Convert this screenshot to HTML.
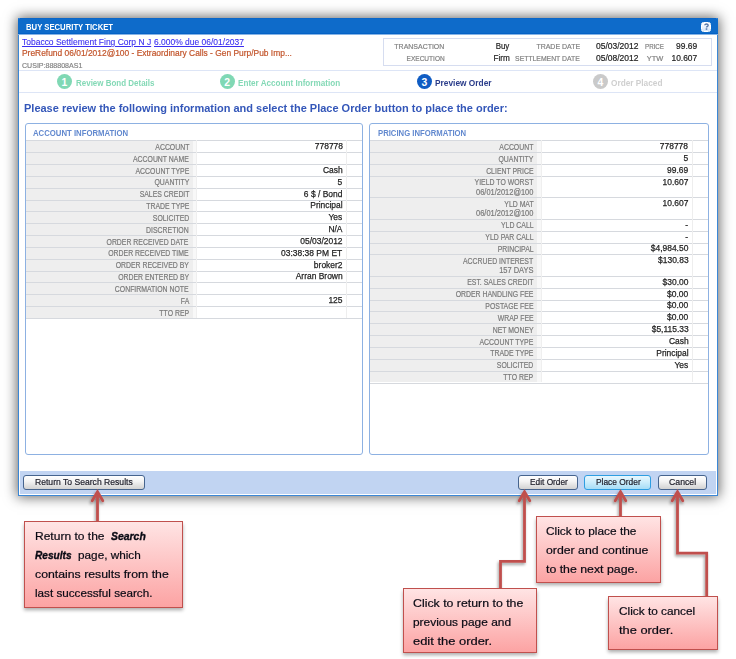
<!DOCTYPE html>
<html><head><meta charset="utf-8">
<style>
*{margin:0;padding:0;box-sizing:border-box}
html,body{width:736px;height:659px;background:#fff;overflow:hidden;position:relative;font-family:"Liberation Sans",sans-serif}
.abs,.bg,.t{position:absolute}
.t{white-space:nowrap;-webkit-text-stroke:0.2px currentColor}
.t.b{-webkit-text-stroke:0}
#win{position:absolute;left:18px;top:18px;width:700px;height:478px;background:#fff;border:1px solid #3b87d6;border-top:none;
  box-shadow:0 0 12px 1px rgba(0,0,0,0.62)}
#title{position:absolute;left:18px;top:18px;width:700px;height:17px;border-radius:2px 2px 0 0;background:linear-gradient(#0862c6 0,#0e6bca 1px,#0e6bca 15px,#0462c6 15px,#0462c6 16px,#86b4e6 16px,#86b4e6 17px)}
#help{position:absolute;left:701.2px;top:21.7px;width:10.3px;height:10px;background:linear-gradient(#ffffff,#d4e6fa);border:1px solid #fff;border-radius:2.5px;}
.panel{position:absolute;top:123px;height:332px;border:1px solid #8db1e2;border-radius:3px;background:#fff}
.btn{position:absolute;top:475px;height:15px;border:1px solid #46648e;border-radius:3px;background:linear-gradient(#ffffff 0%,#f4f4f4 40%,#d2d2d2 100%)}
.call{position:absolute;border:1.5px solid #c0504d;background:linear-gradient(#ffe4e4,#fca3a3);box-shadow:0 2.5px 3.5px rgba(0,0,0,0.32)}
</style></head><body>
<div id="win"></div>
<div id="title"></div>
<div id="help"><svg width="9" height="9" viewBox="0 0 9 9" style="position:absolute;left:-0.5px;top:-0.5px"><path d="M2.8 3.2 C2.8 1.6 6.2 1.6 6.2 3.2 C6.2 4.4 4.5 4.3 4.5 5.6" fill="none" stroke="#5577a8" stroke-width="1.3"/><rect x="3.7" y="6.3" width="1.6" height="1.5" fill="#5577a8"/></svg></div>

<!-- transaction box -->
<div class="bg" style="left:382.5px;top:38px;width:329.5px;height:28px;border:1px solid #d6ddf0"></div>
<!-- divider lines -->
<div class="bg" style="left:19px;top:70px;width:698px;height:1px;background:#dde5f6"></div>
<div class="bg" style="left:19px;top:92px;width:698px;height:1px;background:#dde5f6"></div>
<!-- panels -->
<div class="panel" style="left:25px;width:338px"></div>
<div class="panel" style="left:369px;width:340px"></div>
<div class="bg" style="left:26px;top:140.40px;width:166.60px;height:11.84px;background:#eeeeee"></div>
<div class="bg" style="left:192.60px;top:140.40px;width:3.90px;height:11.84px;background:#f8f8f8"></div>
<div class="bg" style="left:26px;top:140.40px;width:336.00px;height:1px;background:#d6d9de"></div>
<div class="t" style="top:142.89px;font-size:8.4px;line-height:8.4px;color:#7a7a7a;left:147.67px;transform-origin:100% 0;transform:scaleX(0.8238);">ACCOUNT</div>
<div class="t" style="top:142.23px;font-size:9.3px;line-height:9.3px;color:#1e1e1e;left:311.57px;transform-origin:100% 0;transform:scaleX(0.9091);-webkit-text-stroke:0.25px currentColor;">778778</div>
<div class="bg" style="left:26px;top:152.24px;width:166.60px;height:11.84px;background:#eeeeee"></div>
<div class="bg" style="left:192.60px;top:152.24px;width:3.90px;height:11.84px;background:#f8f8f8"></div>
<div class="bg" style="left:26px;top:152.24px;width:336.00px;height:1px;background:#d6d9de"></div>
<div class="t" style="top:154.73px;font-size:8.4px;line-height:8.4px;color:#7a7a7a;left:121.22px;transform-origin:100% 0;transform:scaleX(0.8238);">ACCOUNT NAME</div>
<div class="bg" style="left:26px;top:164.08px;width:166.60px;height:11.84px;background:#eeeeee"></div>
<div class="bg" style="left:192.60px;top:164.08px;width:3.90px;height:11.84px;background:#f8f8f8"></div>
<div class="bg" style="left:26px;top:164.08px;width:336.00px;height:1px;background:#d6d9de"></div>
<div class="t" style="top:166.57px;font-size:8.4px;line-height:8.4px;color:#7a7a7a;left:123.70px;transform-origin:100% 0;transform:scaleX(0.8238);">ACCOUNT TYPE</div>
<div class="t" style="top:165.91px;font-size:9.3px;line-height:9.3px;color:#1e1e1e;left:320.89px;transform-origin:100% 0;transform:scaleX(0.9091);-webkit-text-stroke:0.25px currentColor;">Cash</div>
<div class="bg" style="left:26px;top:175.92px;width:166.60px;height:11.84px;background:#eeeeee"></div>
<div class="bg" style="left:192.60px;top:175.92px;width:3.90px;height:11.84px;background:#f8f8f8"></div>
<div class="bg" style="left:26px;top:175.92px;width:336.00px;height:1px;background:#d6d9de"></div>
<div class="t" style="top:178.41px;font-size:8.4px;line-height:8.4px;color:#7a7a7a;left:146.73px;transform-origin:100% 0;transform:scaleX(0.8238);">QUANTITY</div>
<div class="t" style="top:177.75px;font-size:9.3px;line-height:9.3px;color:#1e1e1e;left:337.43px;transform-origin:100% 0;transform:scaleX(0.9091);-webkit-text-stroke:0.25px currentColor;">5</div>
<div class="bg" style="left:26px;top:187.76px;width:166.60px;height:11.84px;background:#eeeeee"></div>
<div class="bg" style="left:192.60px;top:187.76px;width:3.90px;height:11.84px;background:#f8f8f8"></div>
<div class="bg" style="left:26px;top:187.76px;width:336.00px;height:1px;background:#d6d9de"></div>
<div class="t" style="top:190.25px;font-size:8.4px;line-height:8.4px;color:#7a7a7a;left:128.52px;transform-origin:100% 0;transform:scaleX(0.8238);">SALES CREDIT</div>
<div class="t" style="top:189.59px;font-size:9.3px;line-height:9.3px;color:#1e1e1e;left:300.20px;transform-origin:100% 0;transform:scaleX(0.9091);-webkit-text-stroke:0.25px currentColor;">6 $ / Bond</div>
<div class="bg" style="left:26px;top:199.60px;width:166.60px;height:11.84px;background:#eeeeee"></div>
<div class="bg" style="left:192.60px;top:199.60px;width:3.90px;height:11.84px;background:#f8f8f8"></div>
<div class="bg" style="left:26px;top:199.60px;width:336.00px;height:1px;background:#d6d9de"></div>
<div class="t" style="top:202.09px;font-size:8.4px;line-height:8.4px;color:#7a7a7a;left:136.61px;transform-origin:100% 0;transform:scaleX(0.8238);">TRADE TYPE</div>
<div class="t" style="top:201.43px;font-size:9.3px;line-height:9.3px;color:#1e1e1e;left:306.93px;transform-origin:100% 0;transform:scaleX(0.9091);-webkit-text-stroke:0.25px currentColor;">Principal</div>
<div class="bg" style="left:26px;top:211.44px;width:166.60px;height:11.84px;background:#eeeeee"></div>
<div class="bg" style="left:192.60px;top:211.44px;width:3.90px;height:11.84px;background:#f8f8f8"></div>
<div class="bg" style="left:26px;top:211.44px;width:336.00px;height:1px;background:#d6d9de"></div>
<div class="t" style="top:213.93px;font-size:8.4px;line-height:8.4px;color:#7a7a7a;left:144.86px;transform-origin:100% 0;transform:scaleX(0.8238);">SOLICITED</div>
<div class="t" style="top:213.27px;font-size:9.3px;line-height:9.3px;color:#1e1e1e;left:327.43px;transform-origin:100% 0;transform:scaleX(0.9091);-webkit-text-stroke:0.25px currentColor;">Yes</div>
<div class="bg" style="left:26px;top:223.28px;width:166.60px;height:11.84px;background:#eeeeee"></div>
<div class="bg" style="left:192.60px;top:223.28px;width:3.90px;height:11.84px;background:#f8f8f8"></div>
<div class="bg" style="left:26px;top:223.28px;width:336.00px;height:1px;background:#d6d9de"></div>
<div class="t" style="top:225.77px;font-size:8.4px;line-height:8.4px;color:#7a7a7a;left:137.40px;transform-origin:100% 0;transform:scaleX(0.8238);">DISCRETION</div>
<div class="t" style="top:225.11px;font-size:9.3px;line-height:9.3px;color:#1e1e1e;left:327.10px;transform-origin:100% 0;transform:scaleX(0.9091);-webkit-text-stroke:0.25px currentColor;">N/A</div>
<div class="bg" style="left:26px;top:235.12px;width:166.60px;height:11.84px;background:#eeeeee"></div>
<div class="bg" style="left:192.60px;top:235.12px;width:3.90px;height:11.84px;background:#f8f8f8"></div>
<div class="bg" style="left:26px;top:235.12px;width:336.00px;height:1px;background:#d6d9de"></div>
<div class="t" style="top:237.61px;font-size:8.4px;line-height:8.4px;color:#7a7a7a;left:89.47px;transform-origin:100% 0;transform:scaleX(0.8238);">ORDER RECEIVED DATE</div>
<div class="t" style="top:236.95px;font-size:9.3px;line-height:9.3px;color:#1e1e1e;left:296.05px;transform-origin:100% 0;transform:scaleX(0.9091);-webkit-text-stroke:0.25px currentColor;">05/03/2012</div>
<div class="bg" style="left:26px;top:246.96px;width:166.60px;height:11.84px;background:#eeeeee"></div>
<div class="bg" style="left:192.60px;top:246.96px;width:3.90px;height:11.84px;background:#f8f8f8"></div>
<div class="bg" style="left:26px;top:246.96px;width:336.00px;height:1px;background:#d6d9de"></div>
<div class="t" style="top:249.45px;font-size:8.4px;line-height:8.4px;color:#7a7a7a;left:91.34px;transform-origin:100% 0;transform:scaleX(0.8238);">ORDER RECEIVED TIME</div>
<div class="t" style="top:248.79px;font-size:9.3px;line-height:9.3px;color:#1e1e1e;left:275.40px;transform-origin:100% 0;transform:scaleX(0.9091);-webkit-text-stroke:0.25px currentColor;">03:38:38 PM ET</div>
<div class="bg" style="left:26px;top:258.80px;width:166.60px;height:11.84px;background:#eeeeee"></div>
<div class="bg" style="left:192.60px;top:258.80px;width:3.90px;height:11.84px;background:#f8f8f8"></div>
<div class="bg" style="left:26px;top:258.80px;width:336.00px;height:1px;background:#d6d9de"></div>
<div class="t" style="top:261.29px;font-size:8.4px;line-height:8.4px;color:#7a7a7a;left:100.05px;transform-origin:100% 0;transform:scaleX(0.8238);">ORDER RECEIVED BY</div>
<div class="t" style="top:260.63px;font-size:9.3px;line-height:9.3px;color:#1e1e1e;left:311.07px;transform-origin:100% 0;transform:scaleX(0.9091);-webkit-text-stroke:0.25px currentColor;">broker2</div>
<div class="bg" style="left:26px;top:270.64px;width:166.60px;height:11.84px;background:#eeeeee"></div>
<div class="bg" style="left:192.60px;top:270.64px;width:3.90px;height:11.84px;background:#f8f8f8"></div>
<div class="bg" style="left:26px;top:270.64px;width:336.00px;height:1px;background:#d6d9de"></div>
<div class="t" style="top:273.13px;font-size:8.4px;line-height:8.4px;color:#7a7a7a;left:102.85px;transform-origin:100% 0;transform:scaleX(0.8238);">ORDER ENTERED BY</div>
<div class="t" style="top:272.47px;font-size:9.3px;line-height:9.3px;color:#1e1e1e;left:290.91px;transform-origin:100% 0;transform:scaleX(0.9091);-webkit-text-stroke:0.25px currentColor;">Arran Brown</div>
<div class="bg" style="left:26px;top:282.48px;width:166.60px;height:11.84px;background:#eeeeee"></div>
<div class="bg" style="left:192.60px;top:282.48px;width:3.90px;height:11.84px;background:#f8f8f8"></div>
<div class="bg" style="left:26px;top:282.48px;width:336.00px;height:1px;background:#d6d9de"></div>
<div class="t" style="top:284.97px;font-size:8.4px;line-height:8.4px;color:#7a7a7a;left:99.29px;transform-origin:100% 0;transform:scaleX(0.8238);">CONFIRMATION NOTE</div>
<div class="bg" style="left:26px;top:294.32px;width:166.60px;height:11.84px;background:#eeeeee"></div>
<div class="bg" style="left:192.60px;top:294.32px;width:3.90px;height:11.84px;background:#f8f8f8"></div>
<div class="bg" style="left:26px;top:294.32px;width:336.00px;height:1px;background:#d6d9de"></div>
<div class="t" style="top:296.81px;font-size:8.4px;line-height:8.4px;color:#7a7a7a;left:178.93px;transform-origin:100% 0;transform:scaleX(0.8238);">FA</div>
<div class="t" style="top:296.15px;font-size:9.3px;line-height:9.3px;color:#1e1e1e;left:327.08px;transform-origin:100% 0;transform:scaleX(0.9091);-webkit-text-stroke:0.25px currentColor;">125</div>
<div class="bg" style="left:26px;top:306.16px;width:166.60px;height:11.84px;background:#eeeeee"></div>
<div class="bg" style="left:192.60px;top:306.16px;width:3.90px;height:11.84px;background:#f8f8f8"></div>
<div class="bg" style="left:26px;top:306.16px;width:336.00px;height:1px;background:#d6d9de"></div>
<div class="t" style="top:308.65px;font-size:8.4px;line-height:8.4px;color:#7a7a7a;left:152.95px;transform-origin:100% 0;transform:scaleX(0.8238);">TTO REP</div>
<div class="bg" style="left:26px;top:318.00px;width:336.00px;height:1px;background:#d6d9de"></div>
<div class="bg" style="left:196.00px;top:140.4px;width:1px;height:177.60px;background:#efefef"></div>
<div class="bg" style="left:345.80px;top:140.4px;width:1px;height:177.60px;background:#eeeeee"></div>
<div class="bg" style="left:370px;top:140.40px;width:167.10px;height:11.84px;background:#eeeeee"></div>
<div class="bg" style="left:537.10px;top:140.40px;width:4.30px;height:11.84px;background:#f8f8f8"></div>
<div class="bg" style="left:370px;top:140.40px;width:338.00px;height:1px;background:#d6d9de"></div>
<div class="t" style="top:142.89px;font-size:8.4px;line-height:8.4px;color:#7a7a7a;left:492.17px;transform-origin:100% 0;transform:scaleX(0.8238);">ACCOUNT</div>
<div class="t" style="top:142.23px;font-size:9.3px;line-height:9.3px;color:#1e1e1e;left:657.27px;transform-origin:100% 0;transform:scaleX(0.9091);-webkit-text-stroke:0.25px currentColor;">778778</div>
<div class="bg" style="left:370px;top:152.24px;width:167.10px;height:11.84px;background:#eeeeee"></div>
<div class="bg" style="left:537.10px;top:152.24px;width:4.30px;height:11.84px;background:#f8f8f8"></div>
<div class="bg" style="left:370px;top:152.24px;width:338.00px;height:1px;background:#d6d9de"></div>
<div class="t" style="top:154.73px;font-size:8.4px;line-height:8.4px;color:#7a7a7a;left:491.23px;transform-origin:100% 0;transform:scaleX(0.8238);">QUANTITY</div>
<div class="t" style="top:154.07px;font-size:9.3px;line-height:9.3px;color:#1e1e1e;left:683.13px;transform-origin:100% 0;transform:scaleX(0.9091);-webkit-text-stroke:0.25px currentColor;">5</div>
<div class="bg" style="left:370px;top:164.08px;width:167.10px;height:11.84px;background:#eeeeee"></div>
<div class="bg" style="left:537.10px;top:164.08px;width:4.30px;height:11.84px;background:#f8f8f8"></div>
<div class="bg" style="left:370px;top:164.08px;width:338.00px;height:1px;background:#d6d9de"></div>
<div class="t" style="top:166.57px;font-size:8.4px;line-height:8.4px;color:#7a7a7a;left:475.97px;transform-origin:100% 0;transform:scaleX(0.8238);">CLIENT PRICE</div>
<div class="t" style="top:165.91px;font-size:9.3px;line-height:9.3px;color:#1e1e1e;left:665.03px;transform-origin:100% 0;transform:scaleX(0.9091);-webkit-text-stroke:0.25px currentColor;">99.69</div>
<div class="bg" style="left:370px;top:175.92px;width:167.10px;height:21.50px;background:#eeeeee"></div>
<div class="bg" style="left:537.10px;top:175.92px;width:4.30px;height:21.50px;background:#f8f8f8"></div>
<div class="bg" style="left:370px;top:175.92px;width:338.00px;height:1px;background:#d6d9de"></div>
<div class="t" style="top:178.41px;font-size:8.4px;line-height:8.4px;color:#7a7a7a;left:462.13px;transform-origin:100% 0;transform:scaleX(0.8238);">YIELD TO WORST</div>
<div class="t" style="top:187.91px;font-size:8.4px;line-height:8.4px;color:#7a7a7a;left:469.12px;transform-origin:100% 0;transform:scaleX(0.8905);">06/01/2012@100</div>
<div class="t" style="top:177.75px;font-size:9.3px;line-height:9.3px;color:#1e1e1e;left:659.85px;transform-origin:100% 0;transform:scaleX(0.9091);-webkit-text-stroke:0.25px currentColor;">10.607</div>
<div class="bg" style="left:370px;top:197.42px;width:167.10px;height:21.50px;background:#eeeeee"></div>
<div class="bg" style="left:537.10px;top:197.42px;width:4.30px;height:21.50px;background:#f8f8f8"></div>
<div class="bg" style="left:370px;top:197.42px;width:338.00px;height:1px;background:#d6d9de"></div>
<div class="t" style="top:199.91px;font-size:8.4px;line-height:8.4px;color:#7a7a7a;left:497.92px;transform-origin:100% 0;transform:scaleX(0.8238);">YLD MAT</div>
<div class="t" style="top:209.41px;font-size:8.4px;line-height:8.4px;color:#7a7a7a;left:469.12px;transform-origin:100% 0;transform:scaleX(0.8905);">06/01/2012@100</div>
<div class="t" style="top:199.25px;font-size:9.3px;line-height:9.3px;color:#1e1e1e;left:659.85px;transform-origin:100% 0;transform:scaleX(0.9091);-webkit-text-stroke:0.25px currentColor;">10.607</div>
<div class="bg" style="left:370px;top:218.92px;width:167.10px;height:11.84px;background:#eeeeee"></div>
<div class="bg" style="left:537.10px;top:218.92px;width:4.30px;height:11.84px;background:#f8f8f8"></div>
<div class="bg" style="left:370px;top:218.92px;width:338.00px;height:1px;background:#d6d9de"></div>
<div class="t" style="top:221.41px;font-size:8.4px;line-height:8.4px;color:#7a7a7a;left:494.01px;transform-origin:100% 0;transform:scaleX(0.8238);">YLD CALL</div>
<div class="t" style="top:220.75px;font-size:9.3px;line-height:9.3px;color:#1e1e1e;left:685.20px;transform-origin:100% 0;transform:scaleX(0.9091);-webkit-text-stroke:0.25px currentColor;">-</div>
<div class="bg" style="left:370px;top:230.76px;width:167.10px;height:11.84px;background:#eeeeee"></div>
<div class="bg" style="left:537.10px;top:230.76px;width:4.30px;height:11.84px;background:#f8f8f8"></div>
<div class="bg" style="left:370px;top:230.76px;width:338.00px;height:1px;background:#d6d9de"></div>
<div class="t" style="top:233.25px;font-size:8.4px;line-height:8.4px;color:#7a7a7a;left:475.03px;transform-origin:100% 0;transform:scaleX(0.8238);">YLD PAR CALL</div>
<div class="t" style="top:232.59px;font-size:9.3px;line-height:9.3px;color:#1e1e1e;left:685.20px;transform-origin:100% 0;transform:scaleX(0.9091);-webkit-text-stroke:0.25px currentColor;">-</div>
<div class="bg" style="left:370px;top:242.60px;width:167.10px;height:11.84px;background:#eeeeee"></div>
<div class="bg" style="left:537.10px;top:242.60px;width:4.30px;height:11.84px;background:#f8f8f8"></div>
<div class="bg" style="left:370px;top:242.60px;width:338.00px;height:1px;background:#d6d9de"></div>
<div class="t" style="top:245.09px;font-size:8.4px;line-height:8.4px;color:#7a7a7a;left:489.98px;transform-origin:100% 0;transform:scaleX(0.8238);">PRINCIPAL</div>
<div class="t" style="top:244.43px;font-size:9.3px;line-height:9.3px;color:#1e1e1e;left:646.93px;transform-origin:100% 0;transform:scaleX(0.9091);-webkit-text-stroke:0.25px currentColor;">$4,984.50</div>
<div class="bg" style="left:370px;top:254.44px;width:167.10px;height:21.50px;background:#eeeeee"></div>
<div class="bg" style="left:537.10px;top:254.44px;width:4.30px;height:21.50px;background:#f8f8f8"></div>
<div class="bg" style="left:370px;top:254.44px;width:338.00px;height:1px;background:#d6d9de"></div>
<div class="t" style="top:256.93px;font-size:8.4px;line-height:8.4px;color:#7a7a7a;left:448.29px;transform-origin:100% 0;transform:scaleX(0.8238);">ACCRUED INTEREST</div>
<div class="t" style="top:266.43px;font-size:8.4px;line-height:8.4px;color:#7a7a7a;left:495.10px;transform-origin:100% 0;transform:scaleX(0.8905);">157 DAYS</div>
<div class="t" style="top:256.27px;font-size:9.3px;line-height:9.3px;color:#1e1e1e;left:654.68px;transform-origin:100% 0;transform:scaleX(0.9091);-webkit-text-stroke:0.25px currentColor;">$130.83</div>
<div class="bg" style="left:370px;top:275.94px;width:167.10px;height:11.84px;background:#eeeeee"></div>
<div class="bg" style="left:537.10px;top:275.94px;width:4.30px;height:11.84px;background:#f8f8f8"></div>
<div class="bg" style="left:370px;top:275.94px;width:338.00px;height:1px;background:#d6d9de"></div>
<div class="t" style="top:278.43px;font-size:8.4px;line-height:8.4px;color:#7a7a7a;left:452.94px;transform-origin:100% 0;transform:scaleX(0.8238);">EST. SALES CREDIT</div>
<div class="t" style="top:277.77px;font-size:9.3px;line-height:9.3px;color:#1e1e1e;left:659.85px;transform-origin:100% 0;transform:scaleX(0.9091);-webkit-text-stroke:0.25px currentColor;">$30.00</div>
<div class="bg" style="left:370px;top:287.78px;width:167.10px;height:11.84px;background:#eeeeee"></div>
<div class="bg" style="left:537.10px;top:287.78px;width:4.30px;height:11.84px;background:#f8f8f8"></div>
<div class="bg" style="left:370px;top:287.78px;width:338.00px;height:1px;background:#d6d9de"></div>
<div class="t" style="top:290.27px;font-size:8.4px;line-height:8.4px;color:#7a7a7a;left:438.95px;transform-origin:100% 0;transform:scaleX(0.8238);">ORDER HANDLING FEE</div>
<div class="t" style="top:289.61px;font-size:9.3px;line-height:9.3px;color:#1e1e1e;left:665.03px;transform-origin:100% 0;transform:scaleX(0.9091);-webkit-text-stroke:0.25px currentColor;">$0.00</div>
<div class="bg" style="left:370px;top:299.62px;width:167.10px;height:11.84px;background:#eeeeee"></div>
<div class="bg" style="left:537.10px;top:299.62px;width:4.30px;height:11.84px;background:#f8f8f8"></div>
<div class="bg" style="left:370px;top:299.62px;width:338.00px;height:1px;background:#d6d9de"></div>
<div class="t" style="top:302.11px;font-size:8.4px;line-height:8.4px;color:#7a7a7a;left:475.04px;transform-origin:100% 0;transform:scaleX(0.8238);">POSTAGE FEE</div>
<div class="t" style="top:301.45px;font-size:9.3px;line-height:9.3px;color:#1e1e1e;left:665.03px;transform-origin:100% 0;transform:scaleX(0.9091);-webkit-text-stroke:0.25px currentColor;">$0.00</div>
<div class="bg" style="left:370px;top:311.46px;width:167.10px;height:11.84px;background:#eeeeee"></div>
<div class="bg" style="left:537.10px;top:311.46px;width:4.30px;height:11.84px;background:#f8f8f8"></div>
<div class="bg" style="left:370px;top:311.46px;width:338.00px;height:1px;background:#d6d9de"></div>
<div class="t" style="top:313.95px;font-size:8.4px;line-height:8.4px;color:#7a7a7a;left:489.98px;transform-origin:100% 0;transform:scaleX(0.8238);">WRAP FEE</div>
<div class="t" style="top:313.29px;font-size:9.3px;line-height:9.3px;color:#1e1e1e;left:665.03px;transform-origin:100% 0;transform:scaleX(0.9091);-webkit-text-stroke:0.25px currentColor;">$0.00</div>
<div class="bg" style="left:370px;top:323.30px;width:167.10px;height:11.84px;background:#eeeeee"></div>
<div class="bg" style="left:537.10px;top:323.30px;width:4.30px;height:11.84px;background:#f8f8f8"></div>
<div class="bg" style="left:370px;top:323.30px;width:338.00px;height:1px;background:#d6d9de"></div>
<div class="t" style="top:325.79px;font-size:8.4px;line-height:8.4px;color:#7a7a7a;left:483.91px;transform-origin:100% 0;transform:scaleX(0.8238);">NET MONEY</div>
<div class="t" style="top:325.13px;font-size:9.3px;line-height:9.3px;color:#1e1e1e;left:647.62px;transform-origin:100% 0;transform:scaleX(0.9091);-webkit-text-stroke:0.25px currentColor;">$5,115.33</div>
<div class="bg" style="left:370px;top:335.14px;width:167.10px;height:11.84px;background:#eeeeee"></div>
<div class="bg" style="left:537.10px;top:335.14px;width:4.30px;height:11.84px;background:#f8f8f8"></div>
<div class="bg" style="left:370px;top:335.14px;width:338.00px;height:1px;background:#d6d9de"></div>
<div class="t" style="top:337.63px;font-size:8.4px;line-height:8.4px;color:#7a7a7a;left:468.20px;transform-origin:100% 0;transform:scaleX(0.8238);">ACCOUNT TYPE</div>
<div class="t" style="top:336.97px;font-size:9.3px;line-height:9.3px;color:#1e1e1e;left:666.59px;transform-origin:100% 0;transform:scaleX(0.9091);-webkit-text-stroke:0.25px currentColor;">Cash</div>
<div class="bg" style="left:370px;top:346.98px;width:167.10px;height:11.84px;background:#eeeeee"></div>
<div class="bg" style="left:537.10px;top:346.98px;width:4.30px;height:11.84px;background:#f8f8f8"></div>
<div class="bg" style="left:370px;top:346.98px;width:338.00px;height:1px;background:#d6d9de"></div>
<div class="t" style="top:349.47px;font-size:8.4px;line-height:8.4px;color:#7a7a7a;left:481.11px;transform-origin:100% 0;transform:scaleX(0.8238);">TRADE TYPE</div>
<div class="t" style="top:348.81px;font-size:9.3px;line-height:9.3px;color:#1e1e1e;left:652.63px;transform-origin:100% 0;transform:scaleX(0.9091);-webkit-text-stroke:0.25px currentColor;">Principal</div>
<div class="bg" style="left:370px;top:358.82px;width:167.10px;height:11.84px;background:#eeeeee"></div>
<div class="bg" style="left:537.10px;top:358.82px;width:4.30px;height:11.84px;background:#f8f8f8"></div>
<div class="bg" style="left:370px;top:358.82px;width:338.00px;height:1px;background:#d6d9de"></div>
<div class="t" style="top:361.31px;font-size:8.4px;line-height:8.4px;color:#7a7a7a;left:489.36px;transform-origin:100% 0;transform:scaleX(0.8238);">SOLICITED</div>
<div class="t" style="top:360.65px;font-size:9.3px;line-height:9.3px;color:#1e1e1e;left:673.13px;transform-origin:100% 0;transform:scaleX(0.9091);-webkit-text-stroke:0.25px currentColor;">Yes</div>
<div class="bg" style="left:370px;top:370.66px;width:167.10px;height:11.84px;background:#eeeeee"></div>
<div class="bg" style="left:537.10px;top:370.66px;width:4.30px;height:11.84px;background:#f8f8f8"></div>
<div class="bg" style="left:370px;top:370.66px;width:338.00px;height:1px;background:#d6d9de"></div>
<div class="t" style="top:373.15px;font-size:8.4px;line-height:8.4px;color:#7a7a7a;left:497.45px;transform-origin:100% 0;transform:scaleX(0.8238);">TTO REP</div>
<div class="bg" style="left:370px;top:382.50px;width:338.00px;height:1px;background:#d6d9de"></div>
<div class="bg" style="left:540.90px;top:140.4px;width:1px;height:242.10px;background:#efefef"></div>
<div class="bg" style="left:691.50px;top:140.4px;width:1px;height:242.10px;background:#eeeeee"></div>
<div class="t b" style="top:22.50px;font-size:9.1px;line-height:9.1px;color:#fff;font-weight:bold;left:25.70px;transform-origin:0 0;transform:scaleX(0.8472);">BUY SECURITY TICKET</div>
<div class="t" style="top:38.05px;font-size:8.8px;line-height:8.8px;color:#3a2ef0;left:22.20px;transform-origin:0 0;transform:scaleX(0.9641);text-decoration:underline;-webkit-text-stroke:0.1px currentColor;">Tobacco Settlement Fing Corp N J</div>
<div class="t" style="top:38.05px;font-size:8.8px;line-height:8.8px;color:#3a2ef0;left:154.00px;transform-origin:0 0;transform:scaleX(0.9630);text-decoration:underline;-webkit-text-stroke:0.1px currentColor;">6.000% due 06/01/2037</div>
<div class="t" style="top:49.35px;font-size:8.8px;line-height:8.8px;color:#c2542a;left:22.20px;transform-origin:0 0;transform:scaleX(0.9562);">PreRefund 06/01/2012@100 - Extraordinary Calls - Gen Purp/Pub Imp...</div>
<div class="t" style="top:61.72px;font-size:7.3px;line-height:7.3px;color:#858585;left:22.20px;transform-origin:0 0;transform:scaleX(0.9665);">CUSIP:888808AS1</div>
<div class="t" style="top:42.53px;font-size:8.0px;line-height:8.0px;color:#7f7f7f;left:387.26px;transform-origin:100% 0;transform:scaleX(0.8720);">TRANSACTION</div>
<div class="t" style="top:54.73px;font-size:8.0px;line-height:8.0px;color:#7f7f7f;left:397.93px;transform-origin:100% 0;transform:scaleX(0.8163);">EXECUTION</div>
<div class="t" style="top:41.87px;font-size:8.9px;line-height:8.9px;color:#222;left:494.36px;transform-origin:100% 0;transform:scaleX(0.8933);">Buy</div>
<div class="t" style="top:53.87px;font-size:8.9px;line-height:8.9px;color:#222;left:491.71px;transform-origin:100% 0;transform:scaleX(0.9218);">Firm</div>
<div class="t" style="top:42.63px;font-size:8.0px;line-height:8.0px;color:#7f7f7f;left:529.62px;transform-origin:100% 0;transform:scaleX(0.8726);">TRADE DATE</div>
<div class="t" style="top:54.63px;font-size:8.0px;line-height:8.0px;color:#7f7f7f;left:503.98px;transform-origin:100% 0;transform:scaleX(0.8532);">SETTLEMENT DATE</div>
<div class="t" style="top:41.77px;font-size:8.9px;line-height:8.9px;color:#222;left:596.20px;transform-origin:0 0;transform:scaleX(0.9564);">05/03/2012</div>
<div class="t" style="top:53.77px;font-size:8.9px;line-height:8.9px;color:#222;left:596.20px;transform-origin:0 0;transform:scaleX(0.9564);">05/08/2012</div>
<div class="t" style="top:42.70px;font-size:7.8px;line-height:7.8px;color:#7f7f7f;left:644.50px;transform-origin:0 0;transform:scaleX(0.7970);">PRICE</div>
<div class="t" style="top:54.70px;font-size:7.8px;line-height:7.8px;color:#7f7f7f;left:646.17px;transform-origin:100% 0;transform:scaleX(0.9522);">YTW</div>
<div class="t" style="top:41.77px;font-size:8.9px;line-height:8.9px;color:#222;left:674.83px;transform-origin:100% 0;transform:scaleX(0.9519);">99.69</div>
<div class="t" style="top:53.77px;font-size:8.9px;line-height:8.9px;color:#222;left:669.88px;transform-origin:100% 0;transform:scaleX(0.9441);">10.607</div>
<div class="bg" style="left:56.70px;top:73.90px;width:15.00px;height:15.00px;border-radius:50%;background:#80d8b4"></div><div class="t b" style="top:77.70px;font-size:10.4px;line-height:10.4px;color:#fff;font-weight:bold;left:61.51px;transform-origin:0 0;">1</div>
<div class="t b" style="top:79.07px;font-size:8.9px;line-height:8.9px;color:#84d9b6;font-weight:bold;left:75.70px;transform-origin:0 0;transform:scaleX(0.8990);">Review Bond Details</div>
<div class="bg" style="left:219.50px;top:74.00px;width:15.00px;height:15.00px;border-radius:50%;background:#80d8b4"></div><div class="t b" style="top:77.80px;font-size:10.4px;line-height:10.4px;color:#fff;font-weight:bold;left:224.31px;transform-origin:0 0;">2</div>
<div class="t b" style="top:79.07px;font-size:8.9px;line-height:8.9px;color:#84d9b6;font-weight:bold;left:238.10px;transform-origin:0 0;transform:scaleX(0.9150);">Enter Account Information</div>
<div class="bg" style="left:416.70px;top:74.00px;width:15.00px;height:15.00px;border-radius:50%;background:#0f5cc3"></div><div class="t b" style="top:77.80px;font-size:10.4px;line-height:10.4px;color:#fff;font-weight:bold;left:421.51px;transform-origin:0 0;">3</div>
<div class="t b" style="top:79.07px;font-size:8.9px;line-height:8.9px;color:#2a3c8a;font-weight:bold;left:435.00px;transform-origin:0 0;transform:scaleX(0.9395);">Preview Order</div>
<div class="bg" style="left:592.80px;top:74.20px;width:15.00px;height:15.00px;border-radius:50%;background:#cacaca"></div><div class="t b" style="top:78.00px;font-size:10.4px;line-height:10.4px;color:#fff;font-weight:bold;left:597.61px;transform-origin:0 0;">4</div>
<div class="t b" style="top:79.07px;font-size:8.9px;line-height:8.9px;color:#cfcfcf;font-weight:bold;left:611.00px;transform-origin:0 0;transform:scaleX(0.9313);">Order Placed</div>
<div class="t b" style="top:103.11px;font-size:11.45px;line-height:11.45px;color:#3457b9;font-weight:bold;left:24.20px;transform-origin:0 0;transform:scaleX(0.9609);">Please review the following information and select the Place Order button to place the order:</div>
<div class="t b" style="top:128.50px;font-size:9.1px;line-height:9.1px;color:#6289cf;font-weight:bold;left:32.90px;transform-origin:0 0;transform:scaleX(0.8535);">ACCOUNT INFORMATION</div>
<div class="t b" style="top:128.50px;font-size:9.1px;line-height:9.1px;color:#6289cf;font-weight:bold;left:377.70px;transform-origin:0 0;transform:scaleX(0.8483);">PRICING INFORMATION</div>

<!-- footer -->
<div class="bg" style="left:20px;top:471px;width:696px;height:23px;background:#c1d4f2"></div>
<div class="btn" style="left:23.4px;width:121.2px"></div>
<div class="btn" style="left:518.2px;width:60.2px"></div>
<div class="btn" style="left:584.3px;width:67.2px;border-color:#2d9ee2;background:linear-gradient(#e8f7fe 0%,#cdeefc 45%,#a6dcf6 100%)"></div>
<div class="btn" style="left:657.6px;width:49.2px"></div>
<div class="t" style="top:478.47px;font-size:8.9px;line-height:8.9px;color:#1c1c28;left:35.10px;transform-origin:0 0;transform:scaleX(0.9679);">Return To Search Results</div>
<div class="t" style="top:478.47px;font-size:8.9px;line-height:8.9px;color:#1c1c28;left:530.00px;transform-origin:0 0;transform:scaleX(0.9369);">Edit Order</div>
<div class="t" style="top:478.47px;font-size:8.9px;line-height:8.9px;color:#1c1c28;left:595.70px;transform-origin:0 0;transform:scaleX(0.9434);">Place Order</div>
<div class="t" style="top:478.47px;font-size:8.9px;line-height:8.9px;color:#1c1c28;left:668.50px;transform-origin:0 0;transform:scaleX(0.9818);">Cancel</div>

<!-- connectors -->
<svg class="abs" style="left:0;top:0" width="736" height="659" viewBox="0 0 736 659">
 <defs><filter id="sh" x="-50%" y="-50%" width="200%" height="200%"><feGaussianBlur in="SourceAlpha" stdDeviation="1.6"/><feOffset dx="-1.5" dy="2"/><feComponentTransfer><feFuncA type="linear" slope="0.4"/></feComponentTransfer><feMerge><feMergeNode/><feMergeNode in="SourceGraphic"/></feMerge></filter></defs>
 <g fill="none" stroke="#c0504d" stroke-width="2.8" stroke-linejoin="miter" filter="url(#sh)">
  <path d="M97.5 521 V492"/><path d="M92.2 500.8 L97.5 491.8 L102.8 500.8" stroke-linecap="round"/>
  <path d="M500.5 589 V561.3 H524.5 V492"/><path d="M519.2 500.8 L524.5 491.8 L529.8 500.8" stroke-linecap="round"/>
  <path d="M620.5 517 V492"/><path d="M615.2 500.8 L620.5 491.8 L625.8 500.8" stroke-linecap="round"/>
  <path d="M706.7 597 V553.2 H677.5 V492"/><path d="M672.2 500.8 L677.5 491.8 L682.8 500.8" stroke-linecap="round"/>
 </g>
</svg>

<!-- callouts -->
<div class="call" style="left:24.2px;top:521.2px;width:158.5px;height:86.8px"></div>
<div class="call" style="left:403.4px;top:588.3px;width:133.2px;height:64.3px"></div>
<div class="call" style="left:536.1px;top:515.8px;width:125.4px;height:67.1px"></div>
<div class="call" style="left:608.4px;top:596.4px;width:110.1px;height:54px"></div>
<div class="t" style="top:531.19px;font-size:11.0px;line-height:11.0px;color:#0a0a14;left:34.90px;transform-origin:0 0;transform:scaleX(1.0929);">Return to the</div>
<div class="t" style="top:568.99px;font-size:11.0px;line-height:11.0px;color:#0a0a14;left:34.90px;transform-origin:0 0;transform:scaleX(1.1158);">contains results from the</div>
<div class="t" style="top:588.19px;font-size:11.0px;line-height:11.0px;color:#0a0a14;left:34.90px;transform-origin:0 0;transform:scaleX(1.0610);">last successful search.</div>
<div class="t" style="top:597.69px;font-size:11.0px;line-height:11.0px;color:#0a0a14;left:413.30px;transform-origin:0 0;transform:scaleX(1.1206);">Click to return to the</div>
<div class="t" style="top:616.89px;font-size:11.0px;line-height:11.0px;color:#0a0a14;left:413.30px;transform-origin:0 0;transform:scaleX(1.0827);">previous page and</div>
<div class="t" style="top:635.69px;font-size:11.0px;line-height:11.0px;color:#0a0a14;left:413.30px;transform-origin:0 0;transform:scaleX(1.1744);">edit the order.</div>
<div class="t" style="top:525.99px;font-size:11.0px;line-height:11.0px;color:#0a0a14;left:546.40px;transform-origin:0 0;transform:scaleX(1.0792);">Click to place the</div>
<div class="t" style="top:544.99px;font-size:11.0px;line-height:11.0px;color:#0a0a14;left:546.40px;transform-origin:0 0;transform:scaleX(1.1163);">order and continue</div>
<div class="t" style="top:563.99px;font-size:11.0px;line-height:11.0px;color:#0a0a14;left:546.40px;transform-origin:0 0;transform:scaleX(1.1202);">to the next page.</div>
<div class="t" style="top:606.09px;font-size:11.0px;line-height:11.0px;color:#0a0a14;left:618.70px;transform-origin:0 0;transform:scaleX(1.0745);">Click to cancel</div>
<div class="t" style="top:624.89px;font-size:11.0px;line-height:11.0px;color:#0a0a14;left:618.70px;transform-origin:0 0;transform:scaleX(1.1662);">the order.</div>
<div class="t b" style="top:531.19px;font-size:11.0px;line-height:11.0px;color:#0a0a14;font-weight:bold;font-style:italic;left:110.50px;transform-origin:0 0;transform:scaleX(0.9485);-webkit-text-stroke:0.35px currentColor;">Search</div>
<div class="t b" style="top:550.29px;font-size:11.0px;line-height:11.0px;color:#0a0a14;font-weight:bold;font-style:italic;left:34.90px;transform-origin:0 0;transform:scaleX(0.9186);-webkit-text-stroke:0.35px currentColor;">Results</div>
<div class="t" style="top:550.29px;font-size:11.0px;line-height:11.0px;color:#0a0a14;left:77.50px;transform-origin:0 0;transform:scaleX(1.0697);">page, which</div>
</body></html>
